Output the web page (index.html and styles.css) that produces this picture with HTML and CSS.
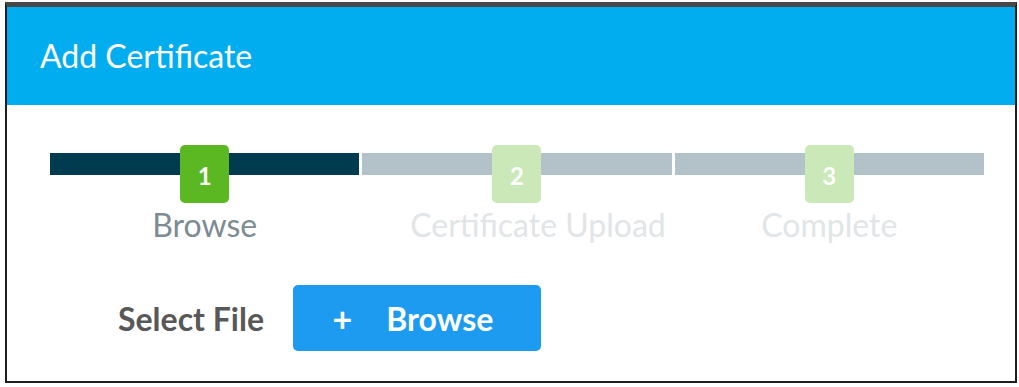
FILE: index.html
```html
<!DOCTYPE html>
<html lang="en">
<head>
  <meta charset="UTF-8">
  <title>Add Certificate</title>
  <link rel="stylesheet" href="styles.css">
</head>
<body>
<div class="frame">
  <div class="header">Add Certificate</div>

  <div class="content">
    <div class="steps">
      <div class="step done">
        <div class="bar"></div>
        <div class="badge">1</div>
        <div class="label">Browse</div>
      </div>
      <div class="step">
        <div class="bar"></div>
        <div class="badge">2</div>
        <div class="label label-wide">Certificate Upload</div>
      </div>
      <div class="step">
        <div class="bar"></div>
        <div class="badge">3</div>
        <div class="label">Complete</div>
      </div>
    </div>

    <div class="file-row">
      <span class="file-label">Select File</span>
      <button class="browse-btn"><span class="plus">+</span>Browse</button>
    </div>
  </div>
</div>
</body>
</html>
```

FILE: styles.css
```css
body { margin: 0; background: #fff; font-family: Lato, "Open Sans", sans-serif; }
.frame { margin: 2px 2px 0 5px; height: 381px; box-sizing: border-box; border: 2px solid #1e1e1e; border-top: 5px solid #474747; }
.header { background: #02adef; color: #fff; height: 98px; box-sizing: border-box; padding: 30px 0 0 33px; font-size: 32px; line-height: 38px; }
.content { padding: 48px 31px 0 43px; }
.steps { display: flex; gap: 3px; }
.step { flex: 1; display: flex; flex-direction: column; align-items: center; }
.bar { align-self: stretch; height: 22px; background: #b3c2c9; }
.step.done .bar { background: #003b4f; }
.badge { position: relative; margin-top: -30px; width: 49px; height: 58px; border-radius: 5px; background: #cbe9b8; color: #fff; font-weight: bold; font-size: 24px; display: flex; align-items: center; justify-content: center; padding-top: 3px; box-sizing: border-box; }
.step.done .badge { background: #5bb823; }
.label { margin-top: 3px; font-size: 32px; line-height: 38px; color: #e1e5e7; }
.label-wide { margin-left: 42px; }
.step.done .label { color: #7d8b92; }
.file-row { display: flex; align-items: center; margin: 41px 0 0 68px; gap: 29px; }
.file-label { font-size: 32px; font-weight: bold; color: #585858; }
.browse-btn { width: 248px; height: 66px; border: none; border-radius: 5px; background: #1c9bf1; color: #fff; font-family: inherit; font-size: 32px; font-weight: bold; display: flex; align-items: center; justify-content: center; padding: 0 8px 0 0; }
.plus { font-size: 34px; margin-right: 34px; }
```
